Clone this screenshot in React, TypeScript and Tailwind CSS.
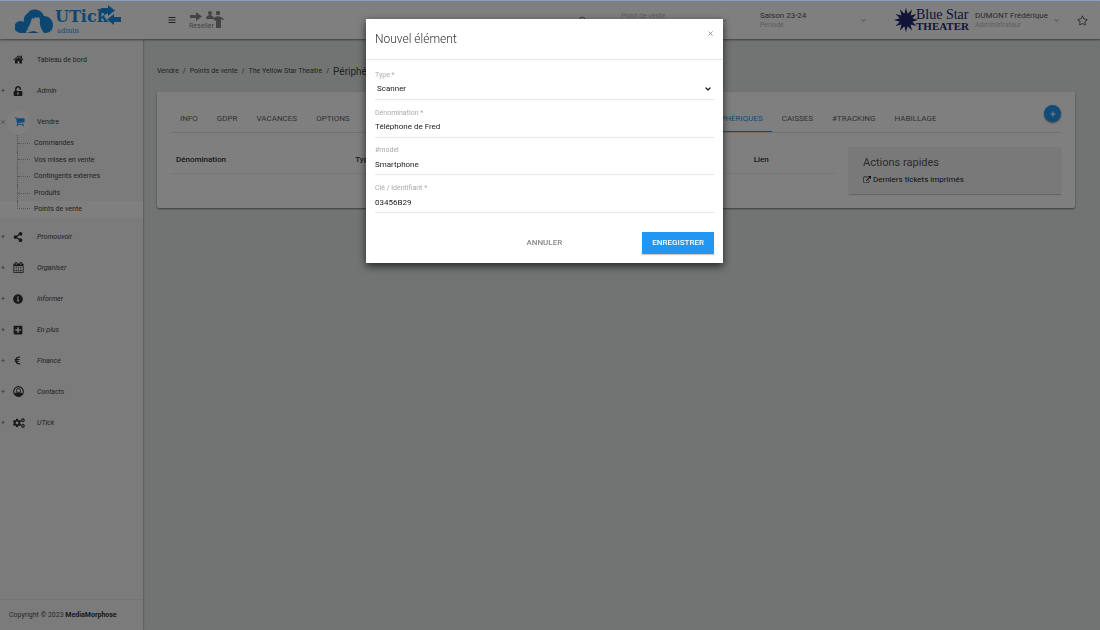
import React from 'react'
import { ChevronDown, Search, X } from 'lucide-react'
import { FaBars, FaCogs, FaEuroSign, FaInfoCircle, FaPlus, FaPlusSquare, FaRegStar, FaShareAlt, FaUnlockAlt } from 'react-icons/fa'

const Glyph = ({ d, className }: { d: string, className: string }) => (
  <svg viewBox="0 0 1792 1792" fill="currentColor" className={className} aria-hidden="true"><path d={d} /></svg>
)

const HOME = 'M1472 992v480q0 26-19 45t-45 19h-384v-384h-256v384h-384q-26 0-45-19t-19-45v-480q0-1 .5-3t.5-3l575-474 575 474q1 2 1 6zm223-69l-62 74q-8 9-21 11h-3q-13 0-21-7l-692-577-692 577q-12 8-24 7-13-2-21-11l-62-74q-8-10-7-23.5t11-21.5l719-599q32-26 76-26t76 26l244 204v-195q0-14 9-23t23-9h192q14 0 23 9t9 23v408l219 182q10 8 11 21.5t-7 23.5z'
const CART = 'M704 1536q0 52-38 90t-90 38-90-38-38-90 38-90 90-38 90 38 38 90zm896 0q0 52-38 90t-90 38-90-38-38-90 38-90 90-38 90 38 38 90zm128-1088v512q0 24-16.5 42.5t-40.5 21.5l-1044 122q13 60 13 70 0 16-24 64h920q26 0 45 19t19 45-19 45-45 19h-1024q-26 0-45-19t-19-45q0-11 8-31.5t16-36 21.5-40 15.5-29.5l-177-823h-204q-26 0-45-19t-19-45 19-45 45-19h256q16 0 28.5 6.5t19.5 15.5 13 24.5 8 26 5.5 29.5 4.5 26h1201q26 0 45 19t19 45z'
const CALENDAR = 'M192 1664h288v-288h-288v288zm352 0h320v-288h-320v288zm-352-352h288v-320h-288v320zm352 0h320v-320h-320v320zm-352-384h288v-288h-288v288zm736 736h320v-288h-320v288zm-384-736h320v-288h-320v288zm768 736h288v-288h-288v288zm-384-352h320v-320h-320v320zm-352-864v-288q0-13-9.5-22.5t-22.5-9.5h-64q-13 0-22.5 9.5t-9.5 22.5v288q0 13 9.5 22.5t22.5 9.5h64q13 0 22.5-9.5t9.5-22.5zm736 864h288v-320h-288v320zm-384-384h320v-288h-320v288zm384 0h288v-288h-288v288zm32-480v-288q0-13-9.5-22.5t-22.5-9.5h-64q-13 0-22.5 9.5t-9.5 22.5v288q0 13 9.5 22.5t22.5 9.5h64q13 0 22.5-9.5t9.5-22.5zm384-64v1280q0 52-38 90t-90 38h-1408q-52 0-90-38t-38-90v-1280q0-52 38-90t90-38h128v-96q0-66 47-113t113-47h64q66 0 113 47t47 113v96h384v-96q0-66 47-113t113-47h64q66 0 113 47t47 113v96h128q52 0 90 38t38 90z'
const EXTERNAL = 'M1408 928v320q0 119-84.5 203.5t-203.5 84.5h-832q-119 0-203.5-84.5t-84.5-203.5v-832q0-119 84.5-203.5t203.5-84.5h704q14 0 23 9t9 23v64q0 14-9 23t-23 9h-704q-66 0-113 47t-47 113v832q0 66 47 113t113 47h832q66 0 113-47t47-113v-320q0-14 9-23t23-9h64q14 0 23 9t9 23zm384-864v512q0 26-19 45t-45 19-45-19l-176-176-652 652q-10 10-23 10t-23-10l-114-114q-10-10-10-23t10-23l652-652-176-176q-19-19-19-45t19-45 45-19h512q26 0 45 19t19 45z'

const UserIcon = () => (
  <svg viewBox="0 0 24 24" className="size-[11px]" aria-hidden="true">
    <circle cx="12" cy="12" r="10.5" fill="none" stroke="currentColor" strokeWidth="2.5" />
    <path d="M3 17c2-3 4-3 6-3l3 1.500 3-1.500c2 0 4 0 6 3-2 4-5 5.500-9 5.500S5 21 3 17z" fill="currentColor" />
    <circle cx="12" cy="10" r="4.500" fill="none" stroke="currentColor" strokeWidth="2" />
  </svg>
)

const UTickLogo = () => (
  <a href="#accueil" aria-label="UTick admin" className="flex items-start pl-[15px] text-[#1a8fe3]">
    <svg viewBox="0 0 38 25" className="mt-1 h-[25px] w-[38px]" aria-hidden="true">
      <path d="M6 24a6 6 0 0 1-1-12c1 0 3 0 4 1-1-4 1-7 4-9C15-1 26-1 29 7c5 0 9 4 9 9s-3 8-8 8z" fill="currentColor" />
      <path d="M11 24c1-5 4-7 5-12l1-3 2 1 1-2 2 1 2-1 1 3c-1 4 1 9 4 13h-5l-5-2z" fill="#fff" />
      <path d="M12 20l3 2 4 1" fill="none" stroke="currentColor" strokeDasharray="1 2" />
    </svg>
    <div className="ml-0.5 pt-0.5 font-['DejaVu_Serif',serif]">
      <div className="text-[16px] leading-5 font-bold">UTick</div>
      <div className="ml-0.5 text-[7px] leading-2">admin</div>
    </div>
    <svg viewBox="0 0 20 20" className="-ml-[7px] h-5 w-5" fill="currentColor" aria-hidden="true">
      <path d="M0 3h7V0l7 5.500-7 5.500V8H0zM20 12h-7V9l-7 5.500 7 5.500v-3h7z" />
    </svg>
  </a>
)

const ResellerLogo = () => (
  <svg viewBox="0 0 36 20" className="h-5 w-9" fill="currentColor" aria-hidden="true">
    <path d="M1 5h6V2l6 4.500L7 11V8H1z" />
    <circle cx="21" cy="3" r="2" />
    <path d="M17 9c0-3 2-4 4-4s3 1 4 3v1z" />
    <circle cx="29" cy="3" r="2.200" />
    <path d="M26 7c2-1 4-1 6 0l3 2-1 1-2-1v9h-5v-7l-3-2z" />
    <text x="0" y="17.500" fontSize="7" fontFamily="Roboto, sans-serif">Reseller</text>
  </svg>
)

const points = Array.from({ length: 24 }, (_, i) => {
  const r = i % 2 ? 6.5 : 12
  const a = (i * Math.PI) / 12
  return `${12 + r * Math.sin(a)},${12 - r * Math.cos(a)}`
}).join(' ')

const BlueStarLogo = () => (
  <a href="#theatre" aria-label="Blue Star Theater" className="flex items-center text-[#23266f]">
    <svg viewBox="0 0 24 24" className="size-6" fill="currentColor" aria-hidden="true"><polygon points={points} /></svg>
    <div className="-ml-0.5 font-['Liberation_Serif',serif]">
      <div className="text-[14px] leading-3">Blue Star</div>
      <div className="text-[11px] leading-[11px] font-bold">THEATER</div>
    </div>
  </a>
)

const MENU = [
  { label: 'Promouvoir', icon: <FaShareAlt size={10} /> },
  { label: 'Organiser', icon: <Glyph d={CALENDAR} className="size-[11px]" /> },
  { label: 'Informer', icon: <FaInfoCircle size={10} /> },
  { label: 'En plus', icon: <FaPlusSquare size={10} /> },
  { label: 'Finance', icon: <FaEuroSign size={9} /> },
  { label: 'Contacts', icon: <UserIcon /> },
  { label: 'UTick', icon: <FaCogs size={12} /> },
]

const SUBMENU = ['Commandes', 'Vos mises en vente', 'Contingents externes', 'Produits', 'Points de vente']

const MenuItem = ({ label, icon, sign = '+', plain = false }: { label: string, icon: React.ReactNode, sign?: string, plain?: boolean }) => (
  <a href="#menu" className="flex h-[31px] items-center text-[#333]">
    <span className="w-[13px] pt-0.5 pl-px text-[7px] text-[#666]">{sign}</span>
    <span className="w-6">{icon}</span>
    <span className={`pt-0.5 text-[#444] ${plain ? '' : 'italic'}`}>{label}</span>
  </a>
)

const Sidebar = () => (
  <aside className="flex w-[143px] shrink-0 flex-col bg-[#f6f6f6] text-[7px] shadow-[0_0_2px_rgba(0,0,0,0.5)]">
    <nav className="flex-1 pt-[5px]">
      <MenuItem plain sign="" label="Tableau de bord" icon={<Glyph d={HOME} className="size-[11px]" />} />
      <MenuItem label="Admin" icon={<FaUnlockAlt size={10} />} />
      <a href="#vendre" className="flex h-[31px] items-center text-[#444]">
        <span className="w-[7px] text-[#666]"><X size={6} /></span>
        <span className="mr-1.5 flex size-6 items-center justify-center rounded-full bg-white text-[#2196f3]">
          <Glyph d={CART} className="size-[11px]" />
        </span>
        <span className="pt-0.5">Vendre</span>
      </a>
      <ul className="-mt-0.5 mb-[3px] flex h-[83px] flex-col">
        {SUBMENU.map((label, i) => {
          const last = i === SUBMENU.length - 1
          return (
            <li key={label} className={`flex flex-1 items-center pl-[17px] ${last ? 'bg-white' : ''}`}>
              <span className={`w-[13px] border-l border-dotted border-[#aaa] ${last ? 'h-2 self-start border-b' : 'flex h-full items-center'}`}>
                {!last && <span className="w-full border-t border-dotted border-[#aaa]" />}
              </span>
              <a href="#vendre" className="pl-1 text-[#444]">{label}</a>
            </li>
          )
        })}
      </ul>
      {MENU.map(item => <MenuItem key={item.label} {...item} />)}
    </nav>
    <footer className="flex h-[31px] items-center border-t border-[#e8e8e8] pl-[9px] text-[#555]">
      <p>Copyright © 2023 <strong className="font-bold text-[#333]">MediaMorphose</strong></p>
    </footer>
  </aside>
)

const Header = () => (
  <header className="relative flex h-[38px] items-center bg-white text-[8px] shadow-[0_1px_2px_rgba(0,0,0,0.5)]">
    <div className="w-[168px] shrink-0"><UTickLogo /></div>
    <button type="button" aria-label="Menu" className="mr-[13px] text-[#444]"><FaBars size={8} /></button>
    <span className="text-[#888]"><ResellerLogo /></span>
    <button type="button" aria-label="Rechercher" className="ml-auto text-[#444]"><Search size={9} /></button>
    <button type="button" className="ml-[34px] flex w-[107px] items-center justify-between text-left text-[#bbb]">
      <span className="mb-2 text-[7px] leading-[9px]">Point de vente</span>
      <ChevronDown size={7} className="text-[#666]" />
    </button>
    <button type="button" className="ml-8 flex w-[107px] items-center justify-between text-left leading-[9px] text-[#555]">
      <span>Saison 23-24<br /><span className="text-[7px] text-[#bbb]">Periode</span></span>
      <ChevronDown size={7} />
    </button>
    <div className="ml-[27px] w-[81px]"><BlueStarLogo /></div>
    <button type="button" className="flex w-[85px] items-center justify-between text-left leading-[9px] text-[#555]">
      <span>DUMONT Frédérique<br /><span className="text-[7px] text-[#bbb]">Administrateur</span></span>
      <ChevronDown size={7} />
    </button>
    <button type="button" aria-label="Favoris" className="mr-3 ml-[17px] text-[#666]"><FaRegStar size={11} /></button>
  </header>
)

const Tab = ({ children, active = false }: { children: React.ReactNode, active?: boolean }) => (
  <button type="button" role="tab" aria-selected={active} className={`h-full px-[9px] pt-0.5 ${active ? 'border-b border-[#2196f3] text-[#2196f3]' : 'text-[#666]'}`}>
    {children}
  </button>
)

const Main = () => (
  <main className="min-w-0 flex-1 pr-[25px] pl-3.5">
    <nav aria-label="Fil d'ariane" className="flex h-[53px] items-center gap-1 pt-3 text-[7px] text-[#444]">
      <a href="#vendre">Vendre</a><span>/</span>
      <a href="#points">Points de vente</a><span>/</span>
      <a href="#theatre">The Yellow Star Theatre</a><span>/</span>
      <span className="text-[10px] leading-3">Périphériques</span>
    </nav>
    <section className="h-[116px] rounded-xs bg-white px-3.5 pt-3 text-[8px] shadow-[0_1px_2px_rgba(0,0,0,0.5)]">
      <div className="flex h-[29px] border-b border-[#e0e0e0]">
        <div role="tablist" className="flex flex-1 gap-px">
          <Tab>INFO</Tab>
          <Tab>GDPR</Tab>
          <Tab>VACANCES</Tab>
          <Tab>OPTIONS</Tab>
          <div className="w-[334px]" />
          <Tab active>PÉRIPHÉRIQUES</Tab>
          <Tab>CAISSES</Tab>
          <Tab>#TRACKING</Tab>
          <Tab>HABILLAGE</Tab>
        </div>
        <button type="button" aria-label="Ajouter" className="mt-px flex size-[17px] items-center justify-center rounded-full bg-[#2196f3] text-white shadow-[0_1px_2px_rgba(0,0,0,0.5)]">
          <FaPlus size={6} />
        </button>
      </div>
      <div className="flex items-start gap-3.5 pt-3.5">
        <table className="flex-1 table-fixed border-b border-[#eee] text-left text-[#333]">
          <thead>
            <tr className="h-[26px]">
              <th className="w-[27%] pl-[5px] font-medium">Dénomination</th>
              <th className="w-[60%] pl-[5px] font-medium">Type</th>
              <th className="pl-[5px] font-medium">Lien</th>
            </tr>
          </thead>
        </table>
        <aside className="h-[47px] w-[212px] bg-[#f3f3f3] px-3.5 pt-2.5 shadow-[0_1px_1px_rgba(0,0,0,0.2)]">
          <h2 className="text-[11px] leading-3 text-[#555]">Actions rapides</h2>
          <a href="#tickets" className="mt-1.5 flex items-center gap-0.5 leading-[10px] text-[#222]">
            <Glyph d={EXTERNAL} className="size-2" />Derniers tickets imprimés
          </a>
        </aside>
      </div>
    </section>
  </main>
)

const FIELDS = [
  { id: 'name', label: 'Dénomination *', value: 'Téléphone de Fred' },
  { id: 'model', label: '#model', value: 'Smartphone' },
  { id: 'key', label: 'Clé / identifiant *', value: '03456B29' },
]

const Modal = () => (
  <div className="fixed inset-x-0 top-px bottom-0 flex items-start justify-center bg-black/50 pt-[18px]">
    <form role="dialog" aria-modal="true" aria-labelledby="modal-title" className="-ml-[11px] w-[357px] bg-white text-[8px] shadow-[0_3px_8px_rgba(0,0,0,0.7)]">
      <header className="flex h-[41px] items-center justify-between border-b border-[#e8e8e8] px-[9px]">
        <h1 id="modal-title" className="text-[12px] leading-4 font-light text-[#333]">Nouvel élément</h1>
        <button type="button" aria-label="Fermer" className="mb-3 text-[#888]"><X size={7} strokeWidth={3} /></button>
      </header>
      <div className="mt-0.5 flex h-[151px] flex-col px-[9px] text-[#222]">
        <div className="flex flex-1 flex-col justify-end border-b border-[#e8e8e8] pb-px">
          <label htmlFor="type" className="text-[7px] leading-[9px] text-[#aaa]">Type *</label>
          <div className="grid items-center">
            <select id="type" className="col-start-1 row-start-1 h-[18px] appearance-none pl-0.5">
              <option>Scanner</option>
            </select>
            <ChevronDown size={8} strokeWidth={4} className="pointer-events-none col-start-1 row-start-1 mr-0.5 justify-self-end" />
          </div>
        </div>
        {FIELDS.map(f => (
          <div key={f.id} className="flex flex-1 flex-col justify-end border-b border-[#e8e8e8] pb-px">
            <label htmlFor={f.id} className="text-[7px] leading-[9px] text-[#aaa]">{f.label}</label>
            <input id={f.id} defaultValue={f.value} className="h-[18px]" />
          </div>
        ))}
      </div>
      <footer className="flex items-center justify-end px-[9px] pt-[19px] pb-[9px] font-medium">
        <button type="button" className="h-[22px] px-20 text-[#888]">ANNULER</button>
        <button type="submit" className="h-[22px] bg-[#2196f3] px-2.5 text-white shadow-[0_1px_1px_rgba(0,0,0,0.2)]">ENREGISTRER</button>
      </footer>
    </form>
  </div>
)

export default function App() {
  return (
    <div className="flex min-h-screen flex-col border-t border-[#8fa6c8] bg-[#e5e9e8] font-['Roboto',sans-serif]">
      <Header />
      <div className="flex flex-1">
        <Sidebar />
        <Main />
      </div>
      <Modal />
    </div>
  )
}
